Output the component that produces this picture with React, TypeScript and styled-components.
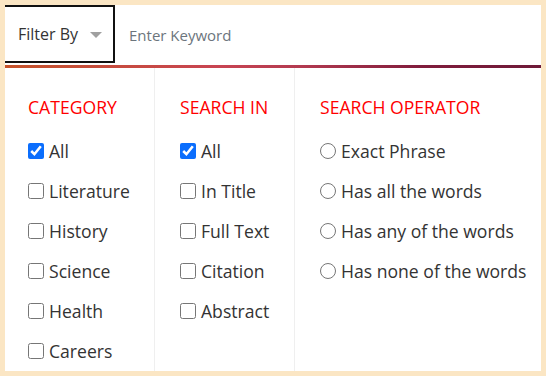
import React from "react";
import styled, { createGlobalStyle } from "styled-components";

const Global = createGlobalStyle`
  html, body { margin: 0; padding: 0; background: #fbe6c4; }
  body { font-family: "Open Sans", "Noto Sans", sans-serif; }
  * { box-sizing: border-box; }
`;

const Page = styled.div`
  padding: 5px;
  width: 546px;
  height: 376px;
`;

const Panel = styled.div`
  background: #fff;
  width: 536px;
  height: 366px;
  display: flex;
  flex-direction: column;
`;

const Header = styled.div`
  display: flex;
  align-items: stretch;
  height: 59px;
`;

const FilterButton = styled.div`
  width: 110px;
  height: 58px;
  border-top: 2px solid #111;
  border-right: 2px solid #111;
  border-bottom: 2px solid #111;
  display: flex;
  align-items: center;
  padding-left: 13px;
  gap: 12px;
  font-size: 16px;
  color: #333;
`;

const Caret = styled.span`
  width: 0;
  height: 0;
  border-left: 6px solid transparent;
  border-right: 6px solid transparent;
  border-top: 6px solid #a0a0a0;
  margin-top: 2px;
`;

const Keyword = styled.input`
  flex: 1;
  border: none;
  outline: none;
  padding: 0 0 0 14px;
  font-family: "Open Sans", "Noto Sans", sans-serif;
  font-size: 15px;
  color: #333;
  background: transparent;
  &::placeholder { color: #6c757d; }
`;

const Accent = styled.div`
  height: 3px;
  margin-top: 1px;
  background: linear-gradient(to right, #c6532a 0%, #c84452 40%, #b33a50 55%, #801c3c 78%, #6e1a38 100%);
`;

const Columns = styled.div`
  flex: 1;
  display: flex;
`;

const Column = styled.div<{ $w?: number; $pl: number; $last?: boolean }>`
  ${(p) => (p.$w ? `width: ${p.$w}px;` : "flex: 1;")}
  padding: 27px 0 0 ${(p) => p.$pl}px;
  border-right: ${(p) => (p.$last ? "none" : "1px solid #efefef")};
  display: flex;
  flex-direction: column;
  gap: 16px;
`;

const Heading = styled.div`
  color: #ff0000;
  font-size: 17.6px;
  line-height: 24px;
  margin-bottom: 4px;
  text-transform: uppercase;
`;

const Option = styled.label`
  display: flex;
  align-items: center;
  gap: 5px;
  font-size: 17.6px;
  line-height: 24px;
  color: #333;
  white-space: nowrap;
`;

const Box = styled.input`
  width: 16px;
  height: 16px;
  margin: 0;
  accent-color: #0b6efd;
`;

const App: React.FC = () => {
  const categories = ["All", "Literature", "History", "Science", "Health", "Careers"];
  const searchIn = ["All", "In Title", "Full Text", "Citation", "Abstract"];
  const operators = ["Exact Phrase", "Has all the words", "Has any of the words", "Has none of the words"];
  return (
    <>
      <Global />
      <Page>
        <Panel>
          <Header>
            <FilterButton>
              Filter By <Caret />
            </FilterButton>
            <Keyword placeholder="Enter Keyword" />
          </Header>
          <Accent />
          <Columns>
            <Column $w={150} $pl={23}>
              <Heading>Category</Heading>
              {categories.map((c, i) => (
                <Option key={c}>
                  <Box type="checkbox" defaultChecked={i === 0} />
                  {c}
                </Option>
              ))}
            </Column>
            <Column $w={140} $pl={25}>
              <Heading>Search In</Heading>
              {searchIn.map((c, i) => (
                <Option key={c}>
                  <Box type="checkbox" defaultChecked={i === 0} />
                  {c}
                </Option>
              ))}
            </Column>
            <Column $pl={25} $last>
              <Heading>Search Operator</Heading>
              {operators.map((c) => (
                <Option key={c}>
                  <Box type="radio" name="op" />
                  {c}
                </Option>
              ))}
            </Column>
          </Columns>
        </Panel>
      </Page>
    </>
  );
};

export default App;
